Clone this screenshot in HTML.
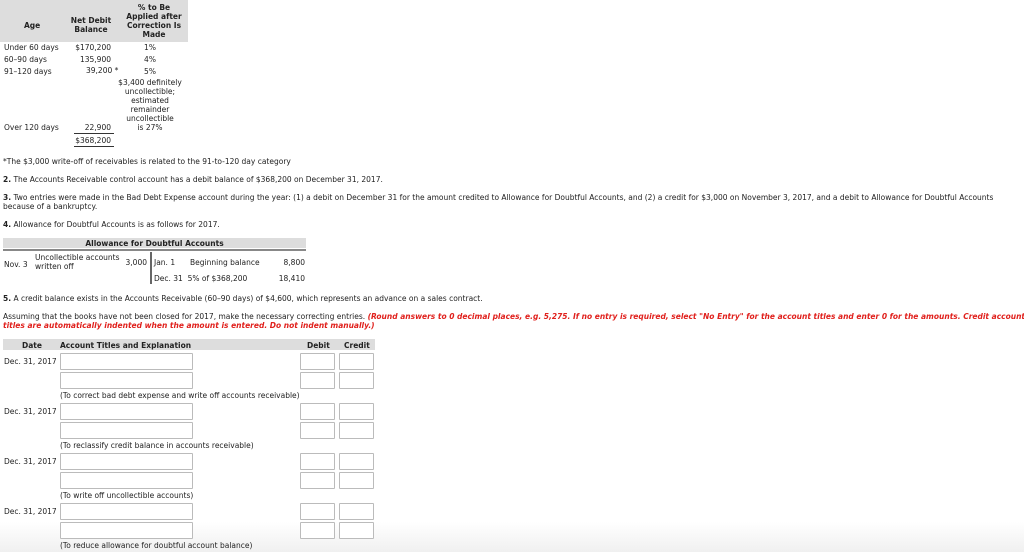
<!DOCTYPE html><html><head><style>
body{margin:0;width:1024px;height:552px;background:#fff;position:relative;overflow:hidden;font-family:"DejaVu Sans","Liberation Sans",sans-serif;font-size:7.5px;color:#222;}
div{position:absolute;white-space:nowrap;line-height:9px}
.b{font-weight:bold}
.g{background:#ddd}
.r{text-align:right}
.c{text-align:center}
.in{border:1px solid #bbb;background:#fff;border-radius:1px;height:15px}
.red{color:#e0201c;font-weight:bold;font-style:italic}
</style></head><body>
<div class="g" style="left:0;top:0;width:188px;height:42px"></div>
<div class="b" style="left:24px;top:21px">Age</div>
<div class="b c" style="left:66px;top:16px;width:50px">Net Debit<br>Balance</div>
<div class="b c" style="left:120px;top:3px;width:68px">% to Be<br>Applied after<br>Correction Is<br>Made</div>
<div style="left:4px;top:42px;line-height:12px">Under 60 days<br>60–90 days<br>91–120 days</div>
<div class="r" style="left:58px;top:42px;width:53px;line-height:12px">$170,200<br>135,900</div>
<div style="left:86px;top:66px">39,200 *</div>
<div class="c" style="left:118px;top:42px;width:64px;line-height:12px">1%<br>4%<br>5%</div>
<div class="c" style="left:116px;top:78px;width:68px">$3,400 definitely<br>uncollectible;<br>estimated<br>remainder<br>uncollectible<br>is 27%</div>
<div style="left:4px;top:123px">Over 120 days</div>
<div class="r" style="left:58px;top:123px;width:53px">22,900</div>
<div style="left:74px;top:133px;width:40px;border-top:1px solid #333"></div>
<div class="r" style="left:58px;top:136px;width:53px">$368,200</div>
<div style="left:74px;top:146px;width:40px;border-top:1px solid #333"></div>
<div style="left:3px;top:157px">*The $3,000 write-off of receivables is related to the 91-to-120 day category</div>
<div style="left:3px;top:175px"><b>2.</b> The Accounts Receivable control account has a debit balance of $368,200 on December 31, 2017.</div>
<div style="left:3px;top:193px"><b>3.</b> Two entries were made in the Bad Debt Expense account during the year: (1) a debit on December 31 for the amount credited to Allowance for Doubtful Accounts, and (2) a credit for $3,000 on November 3, 2017, and a debit to Allowance for Doubtful Accounts<br>because of a bankruptcy.</div>
<div style="left:3px;top:220px"><b>4.</b> Allowance for Doubtful Accounts is as follows for 2017.</div>
<div class="g b c" style="left:3px;top:238px;width:303px;height:10px;line-height:11px">Allowance for Doubtful Accounts</div>
<div style="left:3px;top:249px;width:303px;border-top:2px solid #888"></div>
<div style="left:4px;top:260px">Nov. 3</div>
<div style="left:35px;top:253px">Uncollectible accounts<br>written off</div>
<div class="r" style="left:110px;top:258px;width:37px">3,000</div>
<div style="left:150px;top:252px;height:32px;border-left:2px solid #666"></div>
<div style="left:154px;top:258px">Jan. 1</div>
<div style="left:190px;top:258px">Beginning balance</div>
<div class="r" style="left:260px;top:258px;width:45px">8,800</div>
<div style="left:154px;top:274px">Dec. 31&nbsp; 5% of $368,200</div>
<div class="r" style="left:260px;top:274px;width:45px">18,410</div>
<div style="left:3px;top:294px"><b>5.</b> A credit balance exists in the Accounts Receivable (60–90 days) of $4,600, which represents an advance on a sales contract.</div>
<div style="left:3px;top:312px">Assuming that the books have not been closed for 2017, make the necessary correcting entries. <span class="red">(Round answers to 0 decimal places, e.g. 5,275. If no entry is required, select "No Entry" for the account titles and enter 0 for the amounts. Credit account</span><br><span class="red">titles are automatically indented when the amount is entered. Do not indent manually.)</span></div>
<div class="g" style="left:3px;top:339px;width:372px;height:11px"></div>
<div class="b" style="left:22px;top:341px">Date</div>
<div class="b" style="left:60px;top:341px">Account Titles and Explanation</div>
<div class="b" style="left:307px;top:341px">Debit</div>
<div class="b" style="left:344px;top:341px">Credit</div>
<div style="left:4px;top:357px">Dec. 31, 2017</div>
<div class="in" style="left:60px;top:353px;width:131px"></div><div class="in" style="left:300px;top:353px;width:33px"></div><div class="in" style="left:339px;top:353px;width:33px"></div>
<div class="in" style="left:60px;top:372px;width:131px"></div><div class="in" style="left:300px;top:372px;width:33px"></div><div class="in" style="left:339px;top:372px;width:33px"></div>
<div style="left:60px;top:391px">(To correct bad debt expense and write off accounts receivable)</div>
<div style="left:4px;top:407px">Dec. 31, 2017</div>
<div class="in" style="left:60px;top:403px;width:131px"></div><div class="in" style="left:300px;top:403px;width:33px"></div><div class="in" style="left:339px;top:403px;width:33px"></div>
<div class="in" style="left:60px;top:422px;width:131px"></div><div class="in" style="left:300px;top:422px;width:33px"></div><div class="in" style="left:339px;top:422px;width:33px"></div>
<div style="left:60px;top:441px">(To reclassify credit balance in accounts receivable)</div>
<div style="left:4px;top:457px">Dec. 31, 2017</div>
<div class="in" style="left:60px;top:453px;width:131px"></div><div class="in" style="left:300px;top:453px;width:33px"></div><div class="in" style="left:339px;top:453px;width:33px"></div>
<div class="in" style="left:60px;top:472px;width:131px"></div><div class="in" style="left:300px;top:472px;width:33px"></div><div class="in" style="left:339px;top:472px;width:33px"></div>
<div style="left:60px;top:491px">(To write off uncollectible accounts)</div>
<div style="left:4px;top:507px">Dec. 31, 2017</div>
<div class="in" style="left:60px;top:503px;width:131px"></div><div class="in" style="left:300px;top:503px;width:33px"></div><div class="in" style="left:339px;top:503px;width:33px"></div>
<div style="left:0;top:522px;width:1024px;height:30px;background:linear-gradient(#fff,#f0f0f0)"></div>
<div class="in" style="left:60px;top:522px;width:131px"></div><div class="in" style="left:300px;top:522px;width:33px"></div><div class="in" style="left:339px;top:522px;width:33px"></div>
<div style="left:60px;top:541px">(To reduce allowance for doubtful account balance)</div>
</body></html>
